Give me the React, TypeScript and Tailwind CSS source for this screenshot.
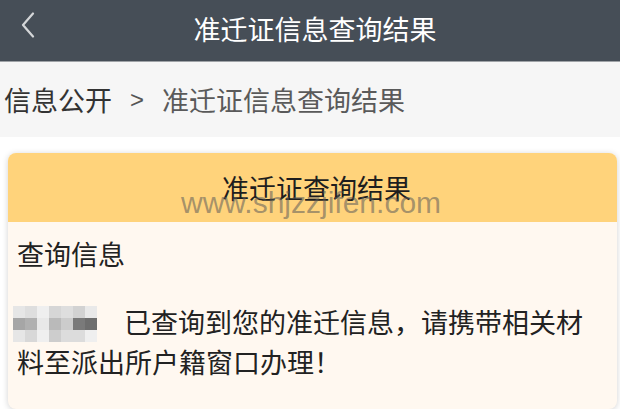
import React from "react";

const cjk = "font-['Noto_Sans_CJK_SC','Noto_Sans',sans-serif]";

const mosaic = [
  ["#e6e6e6", "#dedede", "#efefef", "#d6d6d6", "#dedede", "#d2d2d2", "#e9e9e9"],
  ["#a6a6a6", "#b0b0b0", "#e8e8e8", "#bababa", "#cccccc", "#7a7a7a", "#6e6e6e"],
  ["#e6e6e6", "#d8d8d8", "#efefef", "#cdcdcd", "#dcdcdc", "#dcdcdc", "#efefef"],
];

function BlurredName() {
  return (
    <span className="inline-grid grid-cols-7 align-middle -ml-[4px] mr-[27px] blur-[0.6px] -translate-y-[2px]">
      {mosaic.flat().map((c, i) => (
        <span key={i} className="block w-[12px] h-[12px]" style={{ backgroundColor: c }} />
      ))}
    </span>
  );
}

export default function App() {
  return (
    <div className={`w-[620px] h-[409px] overflow-hidden bg-white ${cjk}`}>
      {/* Top bar */}
      <div className="relative h-[61px] bg-[#464e57] flex items-center justify-center">
        <svg
          className="absolute left-[20px] top-[12px]"
          width="16"
          height="26"
          viewBox="0 0 16 26"
          fill="none"
        >
          <polyline
            points="13,1.5 3,13 13,24.5"
            stroke="#d4d6d8"
            strokeWidth="2.2"
            strokeLinecap="round"
            strokeLinejoin="round"
          />
        </svg>
        <span className="text-[27px] leading-none text-white ml-[10px] -mt-[4px]">准迁证信息查询结果</span>
      </div>
      <div className="h-[1px] bg-[#9fa3a7]" />

      {/* Breadcrumb */}
      <div className="h-[75px] bg-[#f6f6f6] flex items-center pl-[4px] text-[27px] leading-none">
        <span className="text-[#333]">信息公开</span>
        <span className="text-[#555] font-['Liberation_Sans',sans-serif] text-[24px] mx-[18px]">&gt;</span>
        <span className="text-[#5a5a5a]">准迁证信息查询结果</span>
      </div>

      {/* Result card */}
      <div className="ml-[8px] mr-[3px] mt-[16px] rounded-[8px] overflow-hidden bg-[#fff8f0] shadow-[0_1px_6px_rgba(0,0,0,0.18)]">
        <div className="relative h-[69px] bg-[#ffd37b] flex items-center justify-center">
          <span className="text-[27px] leading-none text-[#1e1e1e] ml-[8px]">准迁证查询结果</span>
          <span className="absolute left-[173px] top-[35px] font-['Liberation_Sans',sans-serif] text-[30px] leading-none text-[rgba(90,90,90,0.55)]">
            www.shjzzjifen.com
          </span>
        </div>
        <div className="pl-[9px] pr-[9px] pt-[14px] pb-[30px] text-[27px] leading-[35px] text-[#222]">
          <div>查询信息</div>
          <p className="mt-[33px]">
            <BlurredName />
            已查询到您的准迁信息，请携带相关材料至派出所户籍窗口办理！
          </p>
        </div>
      </div>
    </div>
  );
}
